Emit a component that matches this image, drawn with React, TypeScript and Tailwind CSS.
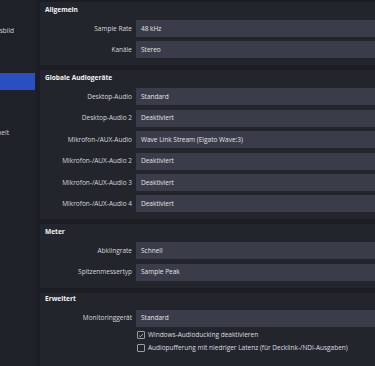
const font = { fontFamily: '"Open Sans", "Noto Sans", sans-serif' };

const sideItems = [
  "Allgemein",
  "Erscheinungsbild",
  "Stream",
  "Ausgabe",
  "Audio",
  "Video",
  "Hotkeys",
  "Barrierefreiheit",
  "Erweitert",
];

function Row({ label, value }: { label: string; value: string }) {
  return (
    <div className="flex items-center h-[17px]">
      <div className="w-[91px] shrink-0 text-right pr-[4px] text-[6.5px] text-[#d6d7dd] whitespace-nowrap">
        {label}
      </div>
      <div className="flex-1 h-full bg-[#3a3c49] flex items-center pl-[5px] text-[6.5px] text-[#e2e3e8] whitespace-nowrap">
        {value}
      </div>
    </div>
  );
}

function Group({ title, children }: { title: string; children: React.ReactNode }) {
  return (
    <div className="bg-[#23252d] pt-[2px] pb-[7px] pl-[5px]">
      <div className="h-[11px] flex items-center text-[6.6px] font-bold text-[#f1f2f5] mb-[5px]">
        {title}
      </div>
      <div className="flex flex-col gap-[4.4px]">{children}</div>
    </div>
  );
}

function Check({ label, checked }: { label: string; checked?: boolean }) {
  return (
    <div className="flex items-center h-[13px] pl-[92px]">
      <div className="w-[8px] h-[8px] shrink-0 border border-[#9a9ba3] rounded-[1px] flex items-center justify-center mr-[3px]">
        {checked && (
          <svg width="7" height="7" viewBox="0 0 8 8" fill="none">
            <path d="M1.5 4.2 L3.2 5.8 L6.5 2" stroke="#d8d9de" strokeWidth="1" />
          </svg>
        )}
      </div>
      <span className="text-[6.5px] text-[#dcdde2] whitespace-nowrap">{label}</span>
    </div>
  );
}

export default function App() {
  return (
    <div className="w-[375px] h-[366px] bg-[#1b1d23] flex overflow-hidden" style={font}>
      <div className="w-[36px] shrink-0 bg-[#1f2128] overflow-hidden pt-[5px]">
        {sideItems.map((s) => (
          <div
            key={s}
            className={`h-[17px] flex items-center mr-[1px] ${s === "Audio" ? "bg-[#2b4fc0]" : ""}`}
          >
            <span className="ml-[-37.5px] text-[6.5px] text-[#d6d7dd] whitespace-nowrap">{s}</span>
          </div>
        ))}
      </div>
      <div className="flex-1 ml-[4px] flex flex-col gap-[5px] pt-[2px] overflow-hidden">
        <Group title="Allgemein">
          <Row label="Sample Rate" value="48 kHz" />
          <Row label="Kanäle" value="Stereo" />
        </Group>
        <Group title="Globale Audiogeräte">
          <Row label="Desktop-Audio" value="Standard" />
          <Row label="Desktop-Audio 2" value="Deaktiviert" />
          <Row label="Mikrofon-/AUX-Audio" value="Wave Link Stream (Elgato Wave:3)" />
          <Row label="Mikrofon-/AUX-Audio 2" value="Deaktiviert" />
          <Row label="Mikrofon-/AUX-Audio 3" value="Deaktiviert" />
          <Row label="Mikrofon-/AUX-Audio 4" value="Deaktiviert" />
        </Group>
        <Group title="Meter">
          <Row label="Abklingrate" value="Schnell" />
          <Row label="Spitzenmessertyp" value="Sample Peak" />
        </Group>
        <div className="bg-[#23252d] pt-[1px] pb-[7px] pl-[5px] flex-1">
          <div className="h-[11px] flex items-center text-[6.6px] font-bold text-[#f1f2f5] mb-[5px]">
            Erweitert
          </div>
          <Row label="Monitoringgerät" value="Standard" />
          <div className="mt-[2px]">
            <Check label="Windows-Audioducking deaktivieren" checked />
            <Check label="Audiopufferung mit niedriger Latenz (für Decklink-/NDI-Ausgaben)" />
          </div>
        </div>
      </div>
    </div>
  );
}
